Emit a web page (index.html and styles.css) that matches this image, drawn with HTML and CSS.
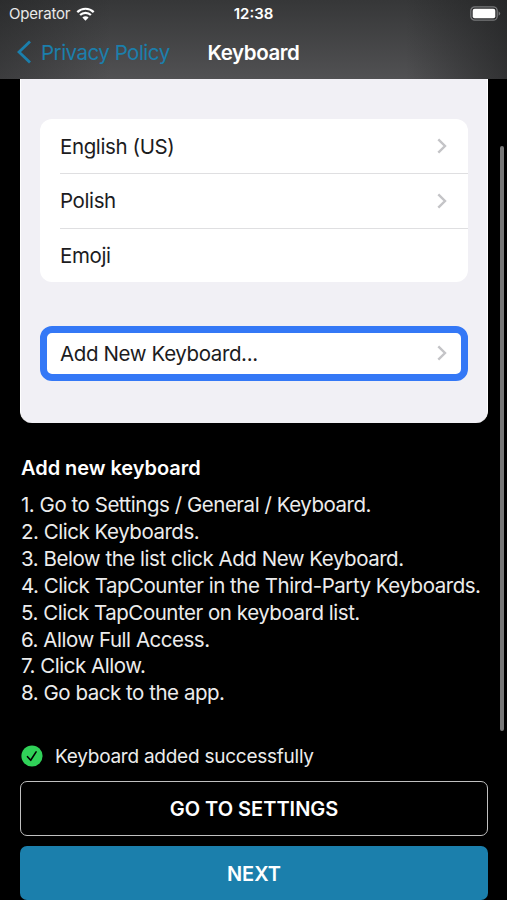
FILE: index.html
```html
<!DOCTYPE html>
<html lang="en">
<head>
    <meta charset="UTF-8">
    <meta name="viewport" content="width=device-width, initial-scale=1.0">
    <title>Keyboard</title>
    <link rel="stylesheet" href="styles.css">
</head>
<body>
    <div class="screen">
        <header class="top">
            <div class="status-bar">
                <div class="carrier">
                    <span>Operator</span>
                    <svg class="wifi" width="19" height="14" viewBox="0 0 19 14">
                        <path d="M1.3 5.1a11.7 11.7 0 0 1 16.4 0M4.1 8a7.7 7.7 0 0 1 10.8 0" fill="none" stroke="#fff" stroke-width="2.2"/>
                        <path d="M9.5 13.7L6.4 10.6a4.4 4.4 0 0 1 6.2 0z" fill="#fff"/>
                    </svg>
                </div>
                <span class="time">12:38</span>
                <svg class="battery" width="31" height="15" viewBox="0 0 31 15">
                    <rect x="0.8" y="0.8" width="26.4" height="13.4" rx="4" fill="none" stroke="#77787a" stroke-width="1.3"/>
                    <rect x="2.7" y="2.7" width="22.6" height="9.6" rx="2" fill="#fff"/>
                    <path d="M28.6 5.2q3.2 2.3 0 4.6z" fill="#77787a"/>
                </svg>
            </div>
            <nav class="nav-bar">
                <a class="back" href="#">
                    <svg width="15" height="24" viewBox="0 0 15 24">
                        <path d="M13 1.5L2 12l11 10.5" fill="none" stroke="#1b7fac" stroke-width="2.8"/>
                    </svg>
                    <span>Privacy Policy</span>
                </a>
                <h1>Keyboard</h1>
            </nav>
        </header>

        <main class="content">
            <section class="preview">
                <ul class="keyboards">
                    <li>
                        <span>English (US)</span>
                        <svg class="chevron" width="10" height="16" viewBox="0 0 10 16"><path d="M1.3 1.3L8 8l-6.7 6.7"/></svg>
                    </li>
                    <li>
                        <span>Polish</span>
                        <svg class="chevron" width="10" height="16" viewBox="0 0 10 16"><path d="M1.3 1.3L8 8l-6.7 6.7"/></svg>
                    </li>
                    <li><span>Emoji</span></li>
                </ul>
                <div class="add-row">
                    <span>Add New Keyboard...</span>
                    <svg class="chevron" width="10" height="16" viewBox="0 0 10 16"><path d="M1.3 1.3L8 8l-6.7 6.7"/></svg>
                </div>
            </section>

            <h2>Add new keyboard</h2>
            <div class="steps">
                <p>1. Go to Settings / General / Keyboard.</p>
                <p>2. Click Keyboards.</p>
                <p>3. Below the list click Add New Keyboard.</p>
                <p>4. Click TapCounter in the Third-Party Keyboards.</p>
                <p>5. Click TapCounter on keyboard list.</p>
                <p>6. Allow Full Access.</p>
                <p>7. Click Allow.</p>
                <p>8. Go back to the app.</p>
            </div>

            <div class="success">
                <svg width="22" height="22" viewBox="0 0 22 22">
                    <circle cx="11" cy="11" r="10.6" fill="#30d158"/>
                    <path d="M6.5 11.7l3.2 3.6 5.4-8.4" fill="none" stroke="#000" stroke-width="1.6" stroke-linecap="round" stroke-linejoin="round"/>
                </svg>
                <span>Keyboard added successfully</span>
            </div>
            <button type="button" class="btn outline">GO TO SETTINGS</button>
            <button type="button" class="btn primary">NEXT</button>
        </main>
        <div class="scrollbar"></div>
    </div>
</body>
</html>
```
FILE: styles.css
```css
* {
    box-sizing: border-box;
}
body {
    margin: 0;
    background: #000;
    color: #fff;
    font-family: Inter, "Liberation Sans", sans-serif;
}
h1, h2, p, ul {
    margin: 0;
    padding: 0;
}
.screen {
    position: relative;
    height: 900px;
    overflow: hidden;
}
.top {
    height: 79px;
    background: linear-gradient(90deg, rgba(28, 29, 30, 0.4), rgba(28, 29, 30, 0) 22%, rgba(28, 29, 30, 0) 80%, rgba(28, 29, 30, 0.6)), linear-gradient(#363738, #515153);
}
.status-bar {
    display: grid;
    grid-template-columns: 1fr auto 1fr;
    align-items: center;
    height: 27px;
    padding: 0 6px 0 9px;
    font-size: 15px;
}
.carrier {
    display: flex;
    align-items: center;
    gap: 6px;
    color: #e9e9e9;
    letter-spacing: -0.2px;
}
.time {
    margin-left: -3px;
    font-weight: 600;
}
.battery {
    justify-self: end;
}
.nav-bar {
    display: grid;
    grid-template-columns: 1fr auto 1fr;
    align-items: center;
    height: 50px;
    padding: 0 17px;
}
.back {
    display: flex;
    align-items: center;
    gap: 9px;
    color: #1b7fac;
    font-size: 20.5px;
    letter-spacing: -0.5px;
    text-decoration: none;
    white-space: nowrap;
}
h1 {
    font-size: 20.5px;
    font-weight: 600;
    letter-spacing: -0.4px;
}
.content {
    padding: 0 19px 0 20px;
}
.preview {
    height: 344px;
    padding: 40px 19px 0 19px;
    border: solid #fff;
    border-width: 0 1px;
    border-radius: 0 0 12px 12px;
    background: #f1f0f5;
    color: #1c1c1e;
    font-size: 20.5px;
    letter-spacing: -0.38px;
}
.keyboards {
    padding-left: 20px;
    border-radius: 12px;
    background: #fff;
    list-style: none;
}
.keyboards li {
    display: flex;
    align-items: center;
    justify-content: space-between;
    height: 54px;
    padding-right: 21px;
}
.keyboards li + li {
    height: 54.5px;
    border-top: 1.5px solid #dfdfe1;
}
.chevron path {
    fill: none;
    stroke: #c4c4c7;
    stroke-width: 2.4;
}
.add-row {
    display: flex;
    align-items: center;
    justify-content: space-between;
    height: 55px;
    margin-top: 44px;
    padding: 0 14px 1px 13px;
    border: 7px solid #3478f6;
    border-radius: 12px;
    background: #fff;
}
h2 {
    margin: 32px 0 0 1px;
    font-size: 20px;
    font-weight: 600;
    letter-spacing: -0.05px;
    line-height: 26px;
}
.steps {
    margin: 11px 0 0 1px;
    color: #ececec;
    font-size: 20.5px;
    letter-spacing: -0.47px;
    line-height: 26.9px;
    white-space: nowrap;
}
.success {
    display: flex;
    align-items: center;
    gap: 12px;
    height: 24px;
    margin-top: 36.6px;
    padding-left: 1px;
    color: #ececec;
    font-size: 19px;
    letter-spacing: -0.25px;
}
.success span {
    padding-top: 2px;
}
.btn {
    display: block;
    width: 100%;
    height: 55px;
    padding: 2px 0 0;
    border: none;
    border-radius: 7px;
    background: none;
    color: #fff;
    font-family: inherit;
    font-size: 20px;
    font-weight: 600;
}
.outline {
    margin-top: 13px;
    border: 1.5px solid #c0c0c0;
}
.primary {
    height: 54px;
    margin-top: 10px;
    background: #1b7fac;
}
.scrollbar {
    position: absolute;
    top: 146px;
    right: 3px;
    width: 4px;
    height: 585px;
    border-radius: 2px;
    background: #777;
}
```
